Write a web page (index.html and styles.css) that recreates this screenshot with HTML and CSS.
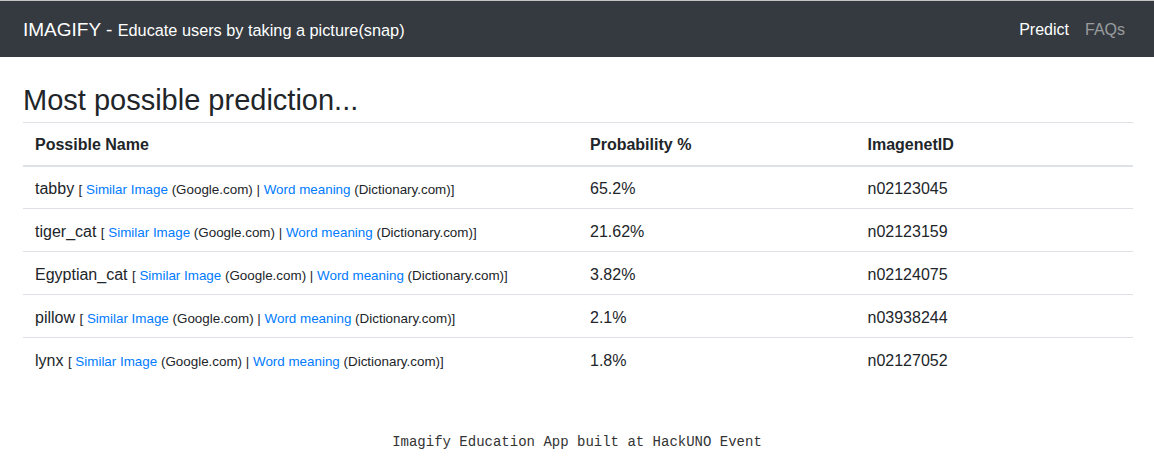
FILE: index.html
```html
<!DOCTYPE html>
<html lang="en">
<head>
<meta charset="utf-8">
<title>Imagify</title>
<link rel="stylesheet" href="styles.css">
</head>
<body>
<nav class="navbar">
  <div class="brand"><span class="brand-name">IMAGIFY - </span><span class="brand-sub">Educate users by taking a picture(snap)</span></div>
  <div class="nav-links">
    <a class="nav-link active" href="#">Predict</a>
    <a class="nav-link" href="#">FAQs</a>
  </div>
</nav>
<main class="content">
  <h3 class="title">Most possible prediction...</h3>
  <table class="table">
    <thead>
      <tr><th class="col-name">Possible Name</th><th class="col-prob">Probability %</th><th class="col-id">ImagenetID</th></tr>
    </thead>
    <tbody>
      <tr><td>tabby <small>[ <a href="#">Similar Image</a> (Google.com) | <a href="#">Word meaning</a> (Dictionary.com)]</small></td><td>65.2%</td><td>n02123045</td></tr>
      <tr><td>tiger_cat <small>[ <a href="#">Similar Image</a> (Google.com) | <a href="#">Word meaning</a> (Dictionary.com)]</small></td><td>21.62%</td><td>n02123159</td></tr>
      <tr><td>Egyptian_cat <small>[ <a href="#">Similar Image</a> (Google.com) | <a href="#">Word meaning</a> (Dictionary.com)]</small></td><td>3.82%</td><td>n02124075</td></tr>
      <tr><td>pillow <small>[ <a href="#">Similar Image</a> (Google.com) | <a href="#">Word meaning</a> (Dictionary.com)]</small></td><td>2.1%</td><td>n03938244</td></tr>
      <tr><td>lynx <small>[ <a href="#">Similar Image</a> (Google.com) | <a href="#">Word meaning</a> (Dictionary.com)]</small></td><td>1.8%</td><td>n02127052</td></tr>
    </tbody>
  </table>
</main>
<footer class="footer">Imagify Education App built at HackUNO Event</footer>
</body>
</html>
```
FILE: styles.css
```css
* { box-sizing: border-box; }
html, body { margin: 0; padding: 0; }
body {
  font-family: "Liberation Sans", Arial, sans-serif;
  font-size: 16px;
  color: #212529;
  background: #fff;
  border-top: 1px solid #c4c4c4;
}
a { color: #007bff; text-decoration: none; }

.navbar {
  background: #343a40;
  height: 56px;
  display: flex;
  align-items: center;
  justify-content: space-between;
  padding: 2px 21px 0 23px;
}
.brand { color: #fff; white-space: nowrap; }
.brand-name { font-size: 19px; }
.brand-sub { font-size: 16.3px; }
.nav-links { display: flex; }
.nav-link { color: rgba(255,255,255,0.5); padding: 0 8px; font-size: 16px; }
.nav-link.active { color: #fff; }

.content { padding: 0 21px 0 23px; }
.title {
  font-size: 29px;
  font-weight: 400;
  line-height: 35px;
  margin: 26px 0 4px;
}
.table {
  width: 100%;
  border-collapse: collapse;
}
.table th, .table td {
  text-align: left;
  padding: 0 12px;
  border-top: 1px solid #dee2e6;
  vertical-align: middle;
}
.table th {
  height: 43px;
  font-weight: 700;
  border-bottom: 2px solid #dee2e6;
  padding-top: 3px;
}
.table td { height: 43px; padding-top: 3px; }
.col-name { width: 50%; }
.col-prob, .col-id { width: 25%; }
.table small { font-size: 13.4px; }
.table tbody tr:last-child td { border-bottom: none; }

.footer {
  font-family: "Liberation Mono", "Courier New", monospace;
  font-size: 14px;
  color: #333;
  text-align: center;
  margin-top: 53px;
}
```
